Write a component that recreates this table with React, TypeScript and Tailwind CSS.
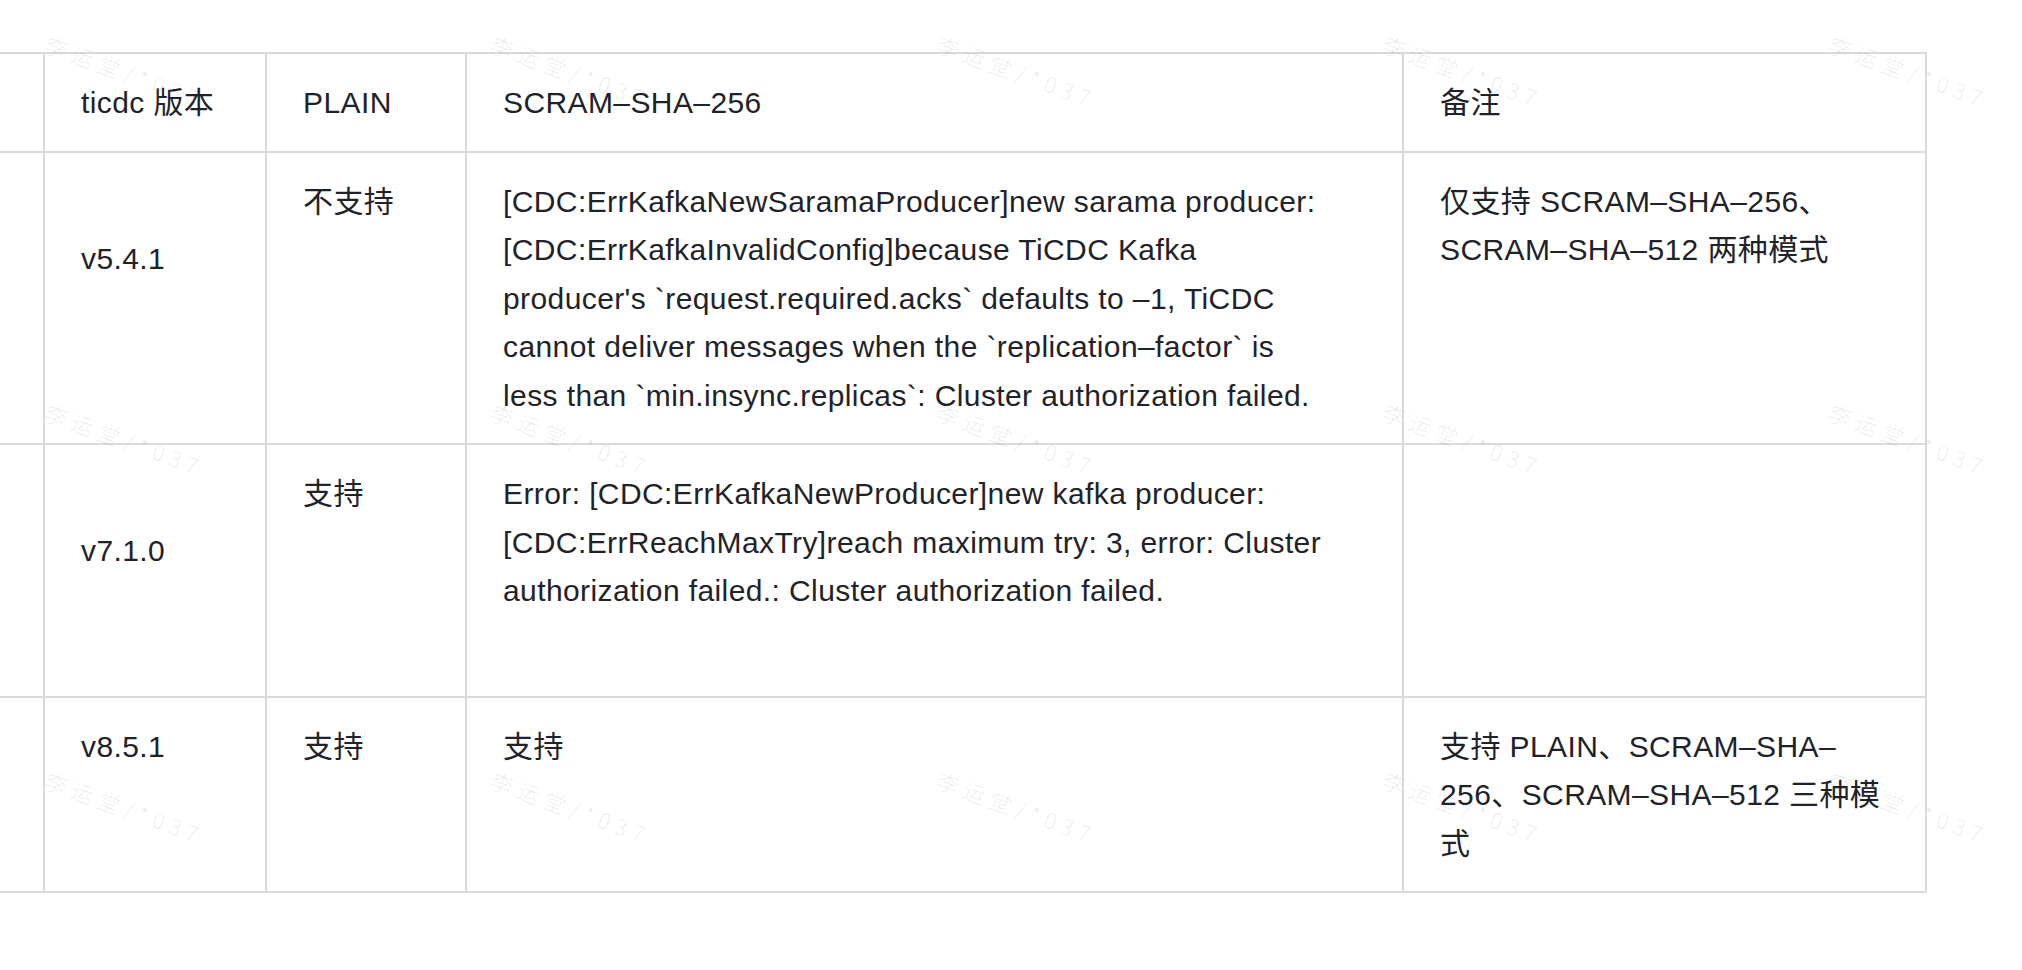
import React from "react";

const border = "border-b-2 border-r-2 border-[#dadada]";
const cellBase = "pl-[36px] pt-[25px] pb-[23px]";

const watermarkPositions: { x: number; y: number }[] = [];
for (let r = 0; r < 3; r++) {
  for (let c = 0; c < 5; c++) {
    watermarkPositions.push({ x: 50 + c * 446, y: 32 + r * 368 });
  }
}

function Row({ cells, c1 }: { cells: React.ReactNode[]; c1?: string }) {
  return (
    <>
      <div className={`${border}`} />
      <div className={`${border} ${cellBase} ${c1 ?? ""}`}>{cells[0]}</div>
      <div className={`${border} ${cellBase}`}>{cells[1]}</div>
      <div className={`${border} ${cellBase} pr-[72px]`}>{cells[2]}</div>
      <div className={`${border} ${cellBase} pr-[30px]`}>{cells[3]}</div>
    </>
  );
}

export default function App() {
  return (
    <div className="relative h-[970px] w-[2022px] overflow-hidden bg-white text-[#1f2329] font-[family-name:Liberation_Sans,Noto_Sans_CJK_SC,sans-serif]">
      <div className="pt-[52px]">
        <div className="grid w-[1927px] grid-cols-[45px_222px_200px_937px_523px] border-t-2 border-[#dadada] text-[30px] leading-[48.5px] tracking-[0.4px]">
          <Row cells={["ticdc 版本", "PLAIN", "SCRAM–SHA–256", "备注"]} />
          <Row
            c1="pt-[82px]"
            cells={[
              "v5.4.1",
              "不支持",
              "[CDC:ErrKafkaNewSaramaProducer]new sarama producer: [CDC:ErrKafkaInvalidConfig]because TiCDC Kafka producer's `request.required.acks` defaults to –1, TiCDC cannot deliver messages when the `replication–factor` is less than `min.insync.replicas`: Cluster authorization failed.",
              "仅支持 SCRAM–SHA–256、SCRAM–SHA–512 两种模式",
            ]}
          />
          <Row
            c1="pt-[82px] pb-[120px]"
            cells={[
              "v7.1.0",
              "支持",
              "Error: [CDC:ErrKafkaNewProducer]new kafka producer: [CDC:ErrReachMaxTry]reach maximum try: 3, error: Cluster authorization failed.: Cluster authorization failed.",
              "",
            ]}
          />
          <Row
            cells={[
              "v8.5.1",
              "支持",
              "支持",
              "支持 PLAIN、SCRAM–SHA–256、SCRAM–SHA–512 三种模式",
            ]}
          />
        </div>
      </div>

      <div className="pointer-events-none absolute inset-0">
        {watermarkPositions.map((p, i) => (
          <span
            key={i}
            className="absolute origin-top-left rotate-[20deg] whitespace-nowrap text-[22px] font-light leading-none tracking-[6px] text-black/[0.09] font-[family-name:Noto_Sans_CJK_SC,sans-serif]"
            style={{ left: p.x, top: p.y }}
          >
            李运堂/*037
          </span>
        ))}
      </div>
    </div>
  );
}
